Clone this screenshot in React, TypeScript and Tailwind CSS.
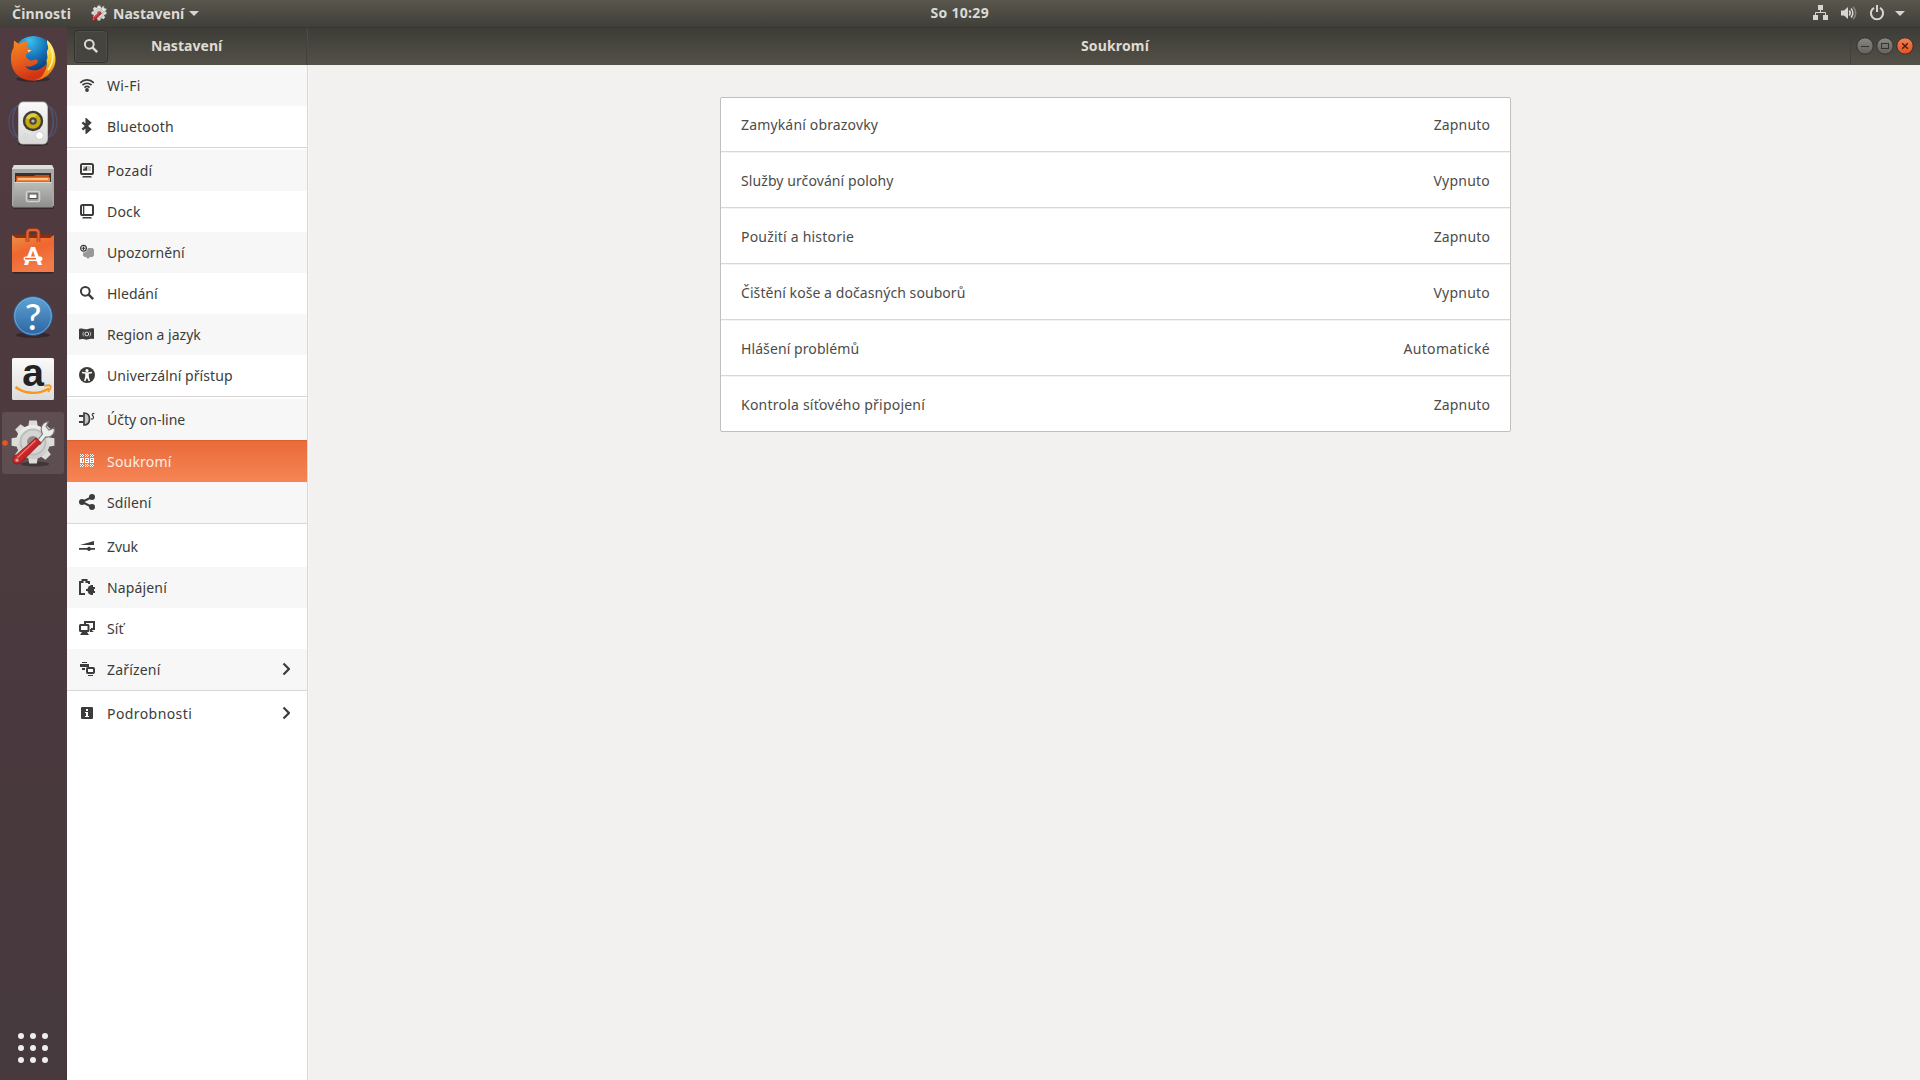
import React from "react";

const dark = "#3c3c3a";

/* ---------- sidebar icons, 16x16 ---------- */

const icons: Record<string, React.ReactNode> = {
  wifi: (
    <g fill="none" stroke={dark} strokeWidth="1.7">
      <path d="M1.2 5.8 C5 2 11 2 14.8 5.8" />
      <path d="M3.4 8.2 C6 5.6 10 5.6 12.6 8.2" />
      <path d="M5.4 10.6 C7 9.2 9 9.2 10.6 10.6" />
      <circle cx="8" cy="13" r="1.9" fill={dark} stroke="none" />
    </g>
  ),
  bluetooth: <path d="M3.4 4.4 L11 11.2 L7.6 14.2 V1.8 L11 4.8 L3.4 11.6" fill="none" stroke={dark} strokeWidth="2.3" />,
  background: (
    <g>
      <rect x="2" y="2" width="12" height="10" rx="1.6" fill="#fff" stroke={dark} strokeWidth="2" />
      <rect x="4" y="4" width="8" height="6" fill="#c4c4c3" />
      <path d="M4 8.5 V7 H5.5 V5.5 H7 V4.5 H8 V8.5Z" fill={dark} />
      <path d="M4 9.5 H12" stroke="#fff" />
      <path d="M4 14 H12 L13 15.5 H3Z" fill={dark} />
    </g>
  ),
  dock: (
    <g>
      <rect x="2" y="2" width="12" height="10" rx="1.6" fill="none" stroke={dark} strokeWidth="2" />
      <rect x="4" y="3" width="1.3" height="8" fill={dark} />
      <path d="M4 14 H12 L13 15.5 H3Z" fill={dark} />
    </g>
  ),
  notify: (
    <g>
      <path d="M6 4 H13.5 L15 5.5 V11.5 L13.5 13 H11 L9 15 L7 13 H5.5 L4 11.5 V8Z" fill="#989896" />
      <circle cx="4.5" cy="4.3" r="4.2" fill="#f7f7f7" />
      <circle cx="4.5" cy="4.3" r="2.9" fill="none" stroke={dark} strokeWidth="1.2" />
      <path d="M4.5 2.4V6.2M2.6 4.3H6.4" stroke={dark} strokeWidth="1.1" />
    </g>
  ),
  search: (
    <g fill="none" stroke={dark}>
      <circle cx="6.3" cy="6.3" r="4.4" strokeWidth="2" />
      <path d="M9.4 9.4 L14.2 14.2" strokeWidth="2.4" />
    </g>
  ),
  region: (
    <g>
      <path d="M0 3 C4 1.3 6 4.2 9 3 C12 1.8 13.5 2.4 15 2.6 V13 C12 12.4 11 13 8.5 13.6 C5.5 14 4 12 0 13.6Z" fill={dark} />
      <circle cx="7.8" cy="8" r="1.9" fill="none" stroke="#e4e4e4" strokeWidth="1" />
      <path d="M4.9 5.6 C3.6 7 3.6 9 4.9 10.4M10.7 5.6 C12 7 12 9 10.7 10.4" fill="none" stroke="#c8c8c8" strokeWidth=".9" />
    </g>
  ),
  access: (
    <g>
      <circle cx="8" cy="8" r="8" fill={dark} />
      <circle cx="8" cy="3.6" r="1.6" fill="#fff" />
      <path d="M3 5.6 L8 6.3 L13 5.6" fill="none" stroke="#fff" strokeWidth="1.5" />
      <path d="M6.2 5.8 H9.8 V9.5 L11 14 L9.5 14 L8 10.8 L6.5 14 L5 14 L6.2 9.5Z" fill="#fff" />
    </g>
  ),
  accounts: (
    <g>
      <path d="M0 4 H4.5 V6 H0ZM0 10 H4.5 V12 H0Z" fill={dark} />
      <path d="M5 2 C9 2 10.5 5 10.5 8 C10.5 11 9 14 5 14Z" fill="#c3c3c2" stroke={dark} strokeWidth="1.7" />
      <path d="M15.4 2.7 C14 2 12.7 3 13.4 4.2 C14 5.4 15 5.6 14.4 7 C14 8 13 8.3 12 7.8" fill="none" stroke={dark} strokeWidth="1.2" />
    </g>
  ),
  privacy: (
    <g>
      <g fill="none" stroke="#fff" strokeDasharray="1 1">
        <path d="M1 2.5H5M6 2.5H10M11 2.5H15" />
        <path d="M2 3.5H5M7 3.5H10M12 3.5H15" />
        <path d="M1 4.5H5M6 4.5H10M11 4.5H15" />
        <path d="M1 12.5H5M6 12.5H10M11 12.5H15" />
        <path d="M2 13.5H5M7 13.5H10M12 13.5H15" />
        <path d="M1 14.5H5M6 14.5H10M11 14.5H15" />
      </g>
      <path d="M1 6H5V11H1ZM6 6H10V11H6ZM11 6H15V11H11Z" fill="#fff" />
      <path d="M3.5 7V10M7 7.5H9M7 9.5H9M12 7.5H14M12 9.5H14" stroke="#ec6f3e" />
    </g>
  ),
  share: (
    <g fill={dark}>
      <path d="M13 3 L3 8 L13 13" fill="none" stroke={dark} strokeWidth="2" />
      <circle cx="3" cy="8" r="3" />
      <circle cx="13" cy="3" r="3" />
      <circle cx="13" cy="13" r="3" />
    </g>
  ),
  sound: (
    <g fill={dark}>
      <path d="M1 7 L15 3 V7Z" />
      <path d="M0 10 H8 L9.5 8.8 H10.5 L12 10 H16 V11.8 H12 L10.5 13 H9.5 L8 11.8 H0Z" />
    </g>
  ),
  power: (
    <g>
      <path d="M6 15 H1 V3 H3.5 V1 H7.5 V3 H10 V5" fill="none" stroke={dark} strokeWidth="2" />
      <path d="M14 6 V8 H16 V10 H15 V12 H16 V14 H14 V16 H12 L9.5 14.6 L8.5 12 H7 V10 H8.5 L9.5 7.4 L12 6Z" fill={dark} />
    </g>
  ),
  network: (
    <g fill="none" stroke={dark} strokeWidth="2">
      <path d="M6 4 V2 H15 V9 H12" />
      <path d="M11 9 H13 V10.5 L15 12 H11Z" fill={dark} stroke="none" />
      <rect x="1" y="5" width="8.5" height="6" rx=".5" />
      <path d="M3 12 H8 L10 15 H1Z" fill={dark} stroke="none" />
    </g>
  ),
  devices: (
    <g fill={dark}>
      <path d="M3 1H8V2H3ZM1 3H10V6H1ZM3 7H6V9H3Z" />
      <rect x="8" y="7" width="7" height="5" rx=".8" fill="#fff" stroke={dark} strokeWidth="2" />
      <path d="M9 14H14V15H9Z" />
    </g>
  ),
  info: (
    <g>
      <rect x="2" y="2" width="12" height="12" rx="1" fill={dark} />
      <path d="M7 4H9V6H7ZM6 7H9V11H10V12H6V11H7V8H6Z" fill="#fff" />
    </g>
  ),
};

type Item = { icon: string; label: string; track: string; stripe?: boolean; active?: boolean; more?: boolean; line?: boolean };

const items: Item[] = [
  { icon: "wifi", label: "Wi-Fi", track: "tracking-[0.35px]", stripe: true },
  { icon: "bluetooth", label: "Bluetooth", track: "tracking-[0.2px]", line: true },
  { icon: "background", label: "Pozadí", track: "tracking-[0.35px]", stripe: true },
  { icon: "dock", label: "Dock", track: "tracking-[0.2px]" },
  { icon: "notify", label: "Upozornění", track: "tracking-[0.1px]", stripe: true },
  { icon: "search", label: "Hledání", track: "" },
  { icon: "region", label: "Region a jazyk", track: "", stripe: true },
  { icon: "access", label: "Univerzální přístup", track: "tracking-[0.07px]", line: true },
  { icon: "accounts", label: "Účty on-line", track: "", stripe: true },
  { icon: "privacy", label: "Soukromí", track: "tracking-[0.2px]", active: true },
  { icon: "share", label: "Sdílení", track: "tracking-[0.1px]", stripe: true, line: true },
  { icon: "sound", label: "Zvuk", track: "tracking-[-0.1px]" },
  { icon: "power", label: "Napájení", track: "tracking-[0.15px]", stripe: true },
  { icon: "network", label: "Síť", track: "tracking-[0.1px]" },
  { icon: "devices", label: "Zařízení", track: "tracking-[0.18px]", stripe: true, more: true, line: true },
  { icon: "info", label: "Podrobnosti", track: "tracking-[0.42px]", more: true },
];

const rows = [
  { label: "Zamykání obrazovky", value: "Zapnuto", track: "tracking-[0.16px]", vtrack: "tracking-[0.14px]" },
  { label: "Služby určování polohy", value: "Vypnuto", track: "tracking-[0.09px]", vtrack: "tracking-[0.22px]" },
  { label: "Použití a historie", value: "Zapnuto", track: "tracking-[0.21px]", vtrack: "tracking-[0.14px]" },
  { label: "Čištění koše a dočasných souborů", value: "Vypnuto", track: "tracking-[0.07px]", vtrack: "tracking-[0.22px]" },
  { label: "Hlášení problémů", value: "Automatické", track: "tracking-[0.09px]", vtrack: "tracking-[0.34px]" },
  { label: "Kontrola síťového připojení", value: "Zapnuto", track: "tracking-[0.22px]", vtrack: "tracking-[0.14px]" },
];

/* ---------- gear with wrench, shared by the dock and the top bar ---------- */

const teeth = [0, 45, 90, 135, 180, 225, 270, 315];

function GearArt({ id }: { id: string }) {
  return (
    <>
      <defs>
        <linearGradient id={id + "g"} x1="0" y1="0" x2="0" y2="1">
          <stop offset="0" stopColor="#eeeeec" />
          <stop offset="1" stopColor="#c9c9c6" />
        </linearGradient>
        <linearGradient id={id + "r"} x1="0" y1="0" x2="1" y2="1">
          <stop offset="0" stopColor="#e8403c" />
          <stop offset="1" stopColor="#a80f12" />
        </linearGradient>
      </defs>
      <g fill="#dcdcda">
        {teeth.map((a) => (
          <path key={a} d="M28 17 L29.2 9.6 H36.8 L38 17Z" transform={`rotate(${a} 33 31)`} />
        ))}
      </g>
      <circle cx="33" cy="31" r="17" fill={`url(#${id}g)`} />
      <circle cx="33" cy="31" r="13.5" fill="#bdbdbb" />
      <circle cx="33" cy="31" r="11.5" fill="#d5d5d3" />
      <circle cx="33" cy="31" r="6" fill="#8f898a" />
      <path d="M36 31 L42.5 23 C39.5 17 42 11.5 48.5 10.5 L46 15.5 L49 19 L54 17 C55.5 22 51.5 27 45.5 26 L40 33.5Z" fill="#ececea" stroke="#777674" strokeWidth="1.1" />
      <path d="M36 27 L41 31.5 L20.5 52 C15.5 55 10.5 50 14 46Z" fill={`url(#${id}r)`} stroke="#8e1214" strokeWidth=".8" />
      <path d="M35.5 29.5 L17.5 46.5" stroke="#f07a74" strokeWidth="1.2" />
      <circle cx="17" cy="49.2" r="1.6" fill="#c9a5a6" />
    </>
  );
}

/* ---------- dock launchers, each drawn in a 66x64 cell ---------- */

const launchers: React.ReactNode[] = [
  // firefox
  <>
    <defs>
      <radialGradient id="ffb" cx=".4" cy=".12" r=".85">
        <stop offset="0" stopColor="#3fc0ee" />
        <stop offset=".5" stopColor="#1673b8" />
        <stop offset="1" stopColor="#0b2c62" />
      </radialGradient>
      <linearGradient id="ffo" x1="0" y1="0" x2=".3" y2="1">
        <stop offset="0" stopColor="#f38a1e" />
        <stop offset=".6" stopColor="#e75a1d" />
        <stop offset="1" stopColor="#cf3415" />
      </linearGradient>
      <linearGradient id="ffy" x1="0" y1="0" x2="0" y2="1">
        <stop offset="0" stopColor="#fff08a" />
        <stop offset=".5" stopColor="#fcc41c" />
        <stop offset="1" stopColor="#e8641b" />
      </linearGradient>
    </defs>
    <ellipse cx="33" cy="52" rx="17" ry="3" fill="#000" opacity=".3" />
    <circle cx="33.5" cy="29" r="20" fill="url(#ffb)" />
    <path d="M47 13 C55 19 57.5 33 54 40 C49 50 41 54 32 53.5 C43 50 48 42 46.5 33 C49 31 45.5 25 47.5 23 C49.5 21 46.5 17 47 13Z" fill="url(#ffy)" />
    <path d="M14 13.5 L19 17 C22 15 26 14 28.5 15.5 L26.5 20 L31.5 23 L26 27.5 C25.5 32.5 31 34.5 34 33 C37 31.5 39 34 37 36.5 C33 39.5 28 40.5 25 39 C29 45 40 45 46 37 C46 47 40 53.5 32 53.5 C19 53.5 10.5 44 11 31 C11 26 12 23 13.5 21Z" fill="url(#ffo)" />
    <path d="M50.5 20 C54 26 53.5 36 48 43" fill="none" stroke="#fff3a0" strokeWidth="1.6" />
    <path d="M27.5 23 H31.5 L28.5 25.5Z" fill="#f3d9c4" />
  </>,
  // rhythmbox
  <>
    <defs>
      <linearGradient id="sp" x1="0" y1="0" x2="0" y2="1">
        <stop offset="0" stopColor="#fafafa" />
        <stop offset="1" stopColor="#d8d8d6" />
      </linearGradient>
    </defs>
    <g fill="none" stroke="#4f6cab" strokeWidth="1.6">
      <path d="M15 16 C7 24 7 38 15 46M51 16 C59 24 59 38 51 46" opacity=".35" />
      <path d="M18 14 C11 22 11 39 18 47M48 14 C55 22 55 39 48 47" opacity=".5" />
    </g>
    <ellipse cx="33" cy="53" rx="15" ry="2" fill="#000" opacity=".35" />
    <path d="M23 11 H43 C46 11 47.5 14 47.5 17 V47 C47.5 51 46 53 43 53 H23 C20 53 18.5 51 18.5 47 V17 C18.5 14 20 11 23 11Z" fill="url(#sp)" stroke="#c4c4c2" strokeWidth=".8" />
    <circle cx="33" cy="30" r="10.2" fill="#3d3d3a" />
    <circle cx="33" cy="30" r="7.8" fill="#c8a90d" />
    <path d="M33 30 L26 27 A7.6 7.6 0 0 1 37 23.5Z" fill="#eed547" opacity=".8" />
    <circle cx="33" cy="30" r="3.8" fill="#4a4a44" />
    <circle cx="33" cy="30" r="1.6" fill="#bdbdb8" />
    <circle cx="39.5" cy="44.5" r="4" fill="#fff" stroke="#c8c8c6" strokeWidth=".9" />
    <rect x="24" y="43" width="3.5" height="5" rx="1" fill="none" stroke="#d0d0ce" strokeWidth=".8" />
  </>,
  // files
  <>
    <defs>
      <linearGradient id="fl" x1="0" y1="0" x2="0" y2="1">
        <stop offset="0" stopColor="#bdbdbb" />
        <stop offset="1" stopColor="#8e8e8c" />
      </linearGradient>
    </defs>
    <rect x="13" y="51" width="41" height="3" fill="#000" opacity=".3" />
    <path d="M14 10 H52 L54 14 V51 H12 V14Z" fill="#a9a9a7" />
    <path d="M14 10 H52 L54 14 H12Z" fill="#dededc" />
    <rect x="15" y="18" width="36" height="10" fill="#393330" />
    <path d="M16 21 H34 L35 20 H49 V28 H16Z" fill="#c6500f" />
    <path d="M17 22.5 H50 V28 H17Z" fill="#f08b3a" />
    <path d="M18 24 H48" stroke="#fff0dc" strokeWidth="1.1" />
    <path d="M16 26.5 H50" stroke="#e4691f" strokeWidth="1.6" />
    <path d="M14.5 27 H51.5 L53 52.5 H13Z" fill="url(#fl)" />
    <path d="M14.5 27.5 H51.5" stroke="#d9d9d7" />
    <rect x="26.5" y="36.5" width="13" height="10" rx="1.5" fill="#999997" stroke="#d0d0ce" strokeWidth="1.6" />
    <rect x="29" y="39" width="8" height="4.5" fill="#fff" stroke="#4a4a48" strokeWidth="1" />
  </>,
  // software
  <>
    <defs>
      <linearGradient id="bag" x1="0" y1="0" x2=".4" y2="1">
        <stop offset="0" stopColor="#e99045" />
        <stop offset=".5" stopColor="#f0662f" />
        <stop offset="1" stopColor="#f27b48" />
      </linearGradient>
    </defs>
    <rect x="13" y="52" width="40" height="2.5" fill="#000" opacity=".35" />
    <path d="M14 15.5 H52 L54 19 H12Z" fill="#8f2f10" />
    <path d="M12 16 L16 19 H50 L54 16 V53 H12Z" fill="url(#bag)" />
    <path d="M27.5 23 V14 C27.5 12 28.5 11 30.5 11 H35.5 C37.5 11 38.5 12 38.5 14 V23" fill="none" stroke="#a93d15" strokeWidth="3.6" />
    <path d="M27.5 23 V14 C27.5 12 28.5 11 30.5 11 H35.5 C37.5 11 38.5 12 38.5 14 V23" fill="none" stroke="#e8642e" strokeWidth="2" />
    <text x="33" y="46" textAnchor="middle" fontFamily="Lato" fontWeight="900" fontSize="25" fill="#fff">A</text>
    <rect x="23.5" y="37.5" width="19" height="4.4" rx="2.2" fill="#fff" />
    <rect x="25" y="38.9" width="11" height="1.6" fill="#ef6a36" />
  </>,
  // help
  <>
    <defs>
      <linearGradient id="hp" x1="0" y1="0" x2="0" y2="1">
        <stop offset="0" stopColor="#5fa3d6" />
        <stop offset="1" stopColor="#2d659f" />
      </linearGradient>
    </defs>
    <ellipse cx="33" cy="52" rx="17" ry="3" fill="#000" opacity=".3" />
    <circle cx="33" cy="33" r="19.3" fill="url(#hp)" stroke="#2d5f94" strokeWidth="1" />
    <circle cx="33" cy="33" r="18.3" fill="none" stroke="#7cb4df" strokeWidth=".8" />
    <text x="33" y="46.5" textAnchor="middle" fontFamily="Lato" fontWeight="500" fontSize="37" fill="#fff">?</text>
  </>,
  // amazon
  <>
    <defs>
      <linearGradient id="am" x1="0" y1="0" x2="0" y2="1">
        <stop offset="0" stopColor="#fafafa" />
        <stop offset="1" stopColor="#dcdcdc" />
      </linearGradient>
    </defs>
    <rect x="12" y="11" width="42" height="42" rx="1.5" fill="url(#am)" />
    <text x="33" y="39" textAnchor="middle" fontFamily="Liberation Sans" fontWeight="700" fontSize="39" fill="#222">a</text>
    <path d="M15.5 40 C24 47 38 48 49 41.5" fill="none" stroke="#f7981d" strokeWidth="2.4" />
    <path d="M44 39 C47 38 50 38.3 50.5 38.8 C51 40.5 49.5 43.5 48 45" fill="none" stroke="#f7981d" strokeWidth="1.7" />
  </>,
  // settings
  <>
    <rect x="2" y="1" width="62" height="62" rx="3" fill="#fff" opacity=".1" />
    <circle cx="5" cy="32" r="2.8" fill="#ea5420" />
    <ellipse cx="35" cy="53" rx="14" ry="2.5" fill="#000" opacity=".3" />
    <GearArt id="dk" />
  </>,
];

function TopBar() {
  return (
    <div className="flex h-[27px] items-center bg-gradient-to-b from-[#59564d] to-[#403f39] text-[14px] font-bold text-[#dbdad6]">
      <div className="flex flex-1 items-center pl-3">
        <span className="w-[59px] tracking-[0.2px]">Činnosti</span>
        <svg className="mb-px ml-[20px] h-[16px] w-[16px]" viewBox="10 8 46 46">
          <GearArt id="tb" />
        </svg>
        <span className="ml-[6px] w-[71px] tracking-[0.05px]">Nastavení</span>
        <svg className="mb-px ml-[5px]" width="10" height="5" viewBox="0 0 10 5">
          <path d="M0 0H10L5 5Z" fill="#d6d5d1" />
        </svg>
      </div>
      <span className="mb-[2px] w-[58px] pl-px tracking-[0.3px] whitespace-nowrap">So 10:29</span>
      <div className="mb-px flex flex-1 items-center justify-end pr-[15px]">
        <svg width="16" height="16" viewBox="0 0 16 16" fill="#d6d5d1">
          <path d="M5 0H10V5H5ZM0 10H5V15H0ZM10 10H15V15H10Z" />
          <path d="M7.5 5V7.5M2.5 10V7.5H12.5V10" fill="none" stroke="#d6d5d1" />
        </svg>
        <svg className="ml-3" width="16" height="16" viewBox="0 0 16 16">
          <path d="M0 5.5H3L7 2V14L3 10.5H0Z" fill="#d6d5d1" />
          <g fill="none" stroke="#d6d5d1" strokeWidth="1.6">
            <path d="M8.2 5.5C9.4 7 9.4 9 8.2 10.5" />
            <path d="M10 3.5C12.4 6 12.4 10 10 12.5" />
            <path d="M12 1.8C15.6 5 15.6 11 12 14.2" opacity=".4" />
          </g>
        </svg>
        <svg className="ml-3" width="16" height="16" viewBox="0 0 16 16" fill="none" stroke="#d6d5d1" strokeWidth="2">
          <path d="M5 2.8A6.1 6.1 0 1 0 11 2.8" />
          <path d="M8 0V7" />
        </svg>
        <svg className="mt-px ml-[10px]" width="10" height="5" viewBox="0 0 10 5">
          <path d="M0 0H10L5 5Z" fill="#d6d5d1" />
        </svg>
      </div>
    </div>
  );
}

function WindowButton({ kind }: { kind: "min" | "max" | "close" }) {
  return (
    <svg width="18" height="18" viewBox="0 0 18 18">
      <defs>
        <linearGradient id={"wb" + kind} x1="0" y1="0" x2="0" y2="1">
          <stop offset="0" stopColor={kind === "close" ? "#f48259" : "#8a8880"} />
          <stop offset="1" stopColor={kind === "close" ? "#e5501c" : "#63615a"} />
        </linearGradient>
      </defs>
      <circle cx="9" cy="9" r="8.2" fill={`url(#wb${kind})`} stroke="#34332f" />
      {kind === "min" && <path d="M5 9.5H13" stroke="#34332f" />}
      {kind === "max" && <rect x="5.5" y="6.5" width="7" height="5" fill="none" stroke="#34332f" />}
      {kind === "close" && <path d="M6.2 6.2L11.8 11.8M11.8 6.2L6.2 11.8" stroke="#3d2016" strokeWidth="1.4" />}
    </svg>
  );
}

function TitleBar() {
  return (
    <div className="flex h-[38px] border-t border-[#383733] bg-gradient-to-b from-[#3d3c37] to-[#545148] text-[14px] font-bold text-[#dfdbd2]">
      <div className="flex w-[240px] items-center border-r border-[#42413b] pl-[7px]">
        <div className="mb-px flex h-[33px] w-[34px] items-center justify-center rounded-[4px] border border-[#32312d] bg-[#45443e] shadow-[inset_0_0_0_1px_#504e47]">
          <svg width="16" height="16" viewBox="0 0 16 16" fill="none" stroke="#dfdbd2">
            <circle cx="6.3" cy="6.3" r="4.4" strokeWidth="2" />
            <path d="M9.4 9.4L14.2 14.2" strokeWidth="2.4" />
          </svg>
        </div>
        <span className="mb-[2px] ml-[43px] tracking-[0.05px]">Nastavení</span>
      </div>
      <div className="flex flex-1 items-center border-l border-[#4d4b44]">
        <span className="mb-[2px] ml-[773px] tracking-[0.15px]">Soukromí</span>
        <div className="ml-auto flex h-full items-center gap-[2px] border-l border-[#42413b] pr-[6px] pb-px pl-[5px]">
          <WindowButton kind="min" />
          <WindowButton kind="max" />
          <WindowButton kind="close" />
        </div>
      </div>
    </div>
  );
}

function SideItem({ item }: { item: Item }) {
  let bg = item.stripe ? "h-[41px] bg-[#f7f7f7] text-[#3c3c3a]" : "h-[41px] text-[#3c3c3a]";
  if (item.active) {
    bg = "h-[42px] border-t border-[#dc6031] bg-gradient-to-b from-[#e96b39] to-[#f68455] text-[#fbeee8]";
  }
  return (
    <>
      <div className={"flex items-center pl-3 " + bg}>
        <svg className={"shrink-0 " + (item.active ? "mb-[3px]" : "mb-px")} width="16" height="16" viewBox="0 0 16 16">
          {icons[item.icon]}
        </svg>
        <span className={"ml-3 whitespace-nowrap " + item.track}>{item.label}</span>
        {item.more && (
          <svg className="mr-[17px] mb-px ml-auto" width="8" height="14" viewBox="0 0 8 14">
            <path d="M1.5 1.5L6.9 7L1.5 12.5" fill="none" stroke={dark} strokeWidth="2.2" />
          </svg>
        )}
      </div>
      {item.line && <div className="h-[3px] border-t border-[#d9d8d6]" />}
    </>
  );
}

export default function App() {
  return (
    <div className="flex h-[1080px] w-[1920px] flex-col overflow-hidden bg-[#f2f1f0] font-['Noto_Sans','Open_Sans',sans-serif] text-[14px] leading-5">
      <TopBar />
      <div className="flex min-h-0 flex-1">
        <div className="flex w-[67px] flex-col bg-gradient-to-b from-[#503b40] to-[#46393d]">
          {launchers.map((art, i) => (
            <svg key={i} width="66" height="64" viewBox="0 0 66 64">
              {art}
            </svg>
          ))}
          <svg className="mt-auto mb-[17px] ml-[18px]" width="30" height="30" viewBox="0 0 30 30" fill="#eeeeec">
            {[3, 15, 27].map((y) => [3, 15, 27].map((x) => <circle key={x + "-" + y} cx={x} cy={y} r="3" />))}
          </svg>
        </div>

        <div className="flex flex-1 flex-col">
          <TitleBar />
          <div className="flex flex-1">
            <div className="w-[241px] border-r border-[#d9d7d4] bg-white">
              {items.map((item) => (
                <SideItem key={item.label} item={item} />
              ))}
            </div>
            <div className="flex-1 border-l border-[#f8f7f6]">
              <div className="mt-8 ml-[411px] w-[791px] rounded-[2px] border border-[#c2c0bd] bg-white text-[#4c4c4a]">
                {rows.map((row, i) => (
                  <div
                    key={row.label}
                    className={
                      "flex items-center justify-between px-5 " +
                      (i === 0 ? "h-[53px]" : "h-[56px] border-t border-[#d9d8d6] pt-[2px] shadow-[inset_0_1px_0_#f3f3f2]")
                    }
                  >
                    <span className={row.track}>{row.label}</span>
                    <span className={row.vtrack}>{row.value}</span>
                  </div>
                ))}
              </div>
            </div>
          </div>
        </div>
      </div>
    </div>
  );
}
